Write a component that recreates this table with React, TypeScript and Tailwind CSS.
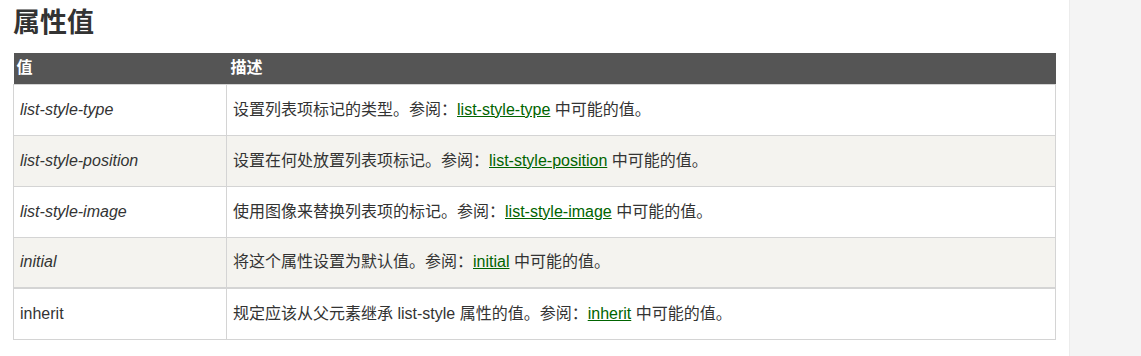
const rows = [
  { name: 'list-style-type', italic: true, pre: '设置列表项标记的类型。参阅：', link: 'list-style-type' },
  { name: 'list-style-position', italic: true, pre: '设置在何处放置列表项标记。参阅：', link: 'list-style-position' },
  { name: 'list-style-image', italic: true, pre: '使用图像来替换列表项的标记。参阅：', link: 'list-style-image' },
  { name: 'initial', italic: true, pre: '将这个属性设置为默认值。参阅：', link: 'initial' },
  { name: 'inherit', italic: false, pre: '规定应该从父元素继承 list-style 属性的值。参阅：', link: 'inherit' },
];

export default function App() {
  return (
    <div
      className="flex h-[356px] w-[1141px] bg-white text-[#333]"
      style={{ fontFamily: '"Liberation Sans", "Noto Sans CJK SC", sans-serif' }}
    >
      <div className="w-[1069px] shrink-0 pl-[13px] pr-[13px]">
        <h2 className="mt-[6px] mb-[12px] text-[27px] leading-[35px] font-bold text-[#333]">属性值</h2>
        <table className="w-[1043px] border-collapse text-[16px]">
          <thead>
            <tr className="h-[31px] bg-[#555] text-left text-white">
              <th className="w-[213px] px-[3px] font-bold">值</th>
              <th className="px-[4px] font-bold">描述</th>
            </tr>
          </thead>
          <tbody>
            {rows.map((r, i) => (
              <tr
                key={r.name}
                className={
                  (i % 2 === 1 ? 'bg-[#f4f3ef] ' : 'bg-white ') +
                  (i === 4 ? 'border-t-2 ' : '') +
                  'h-[51px] border-[#d4d4d4]'
                }
              >
                <td className={'border border-[#d4d4d4] px-[6px] ' + (r.italic ? 'italic' : '')}>{r.name}</td>
                <td className="border border-[#d4d4d4] px-[6px]">
                  {r.pre}
                  <a href="#" className="text-[#006400] underline">{r.link}</a> 中可能的值。
                </td>
              </tr>
            ))}
          </tbody>
        </table>
      </div>
      <div className="flex-1 border-l border-[#ececec] bg-[#f4f4f4]" />
    </div>
  );
}
